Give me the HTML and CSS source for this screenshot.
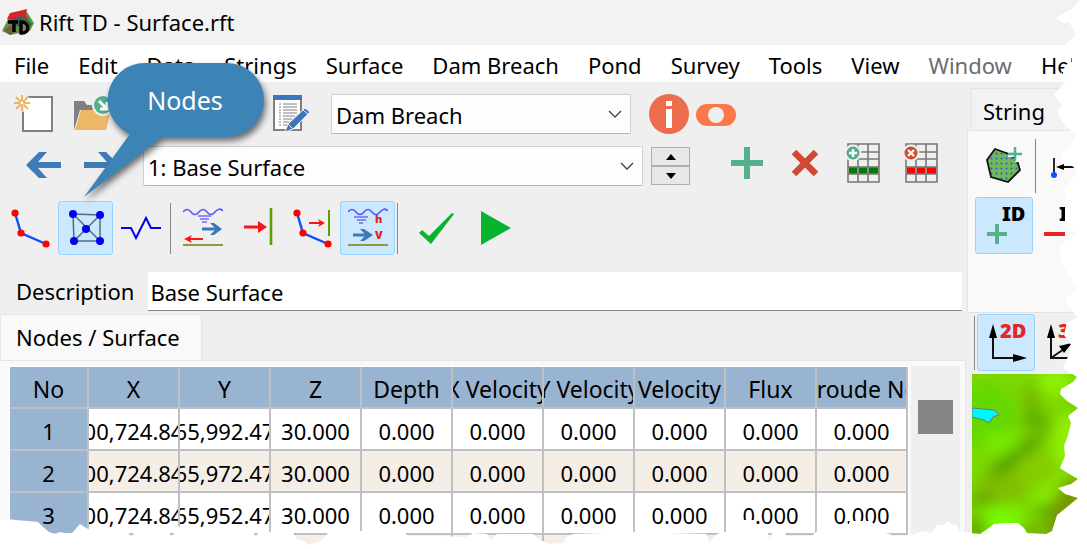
FILE: index.html
```html
<!DOCTYPE html>
<html lang="en">
<head>
<meta charset="utf-8">
<title>Rift TD - Surface.rft</title>
<link rel="stylesheet" href="styles.css">
</head>
<body>
<div class="window">
  <header class="titlebar">
    <svg class="logo" width="32" height="28" viewBox="0 0 32 28" aria-hidden="true">
      <path d="M0 23L5 13L8 6L25 4L32 15L28 23L8 27Z" fill="#5f9150"/>
      <path d="M7 12L22 7L30 16L26 22L10 16Z" fill="#3d6b35"/>
      <path d="M2 22L9 17L15 23L8 27Z" fill="#72613a"/>
      <path d="M5 11L8 5L17 3L25 1L24 7L26 10L18 8L12 11Z" fill="#d5232c"/>
      <path d="M10 12L20 9L21 12L9 16Z" fill="#315f83"/>
      <path d="M6 14H16M12 14V24" stroke="#000" stroke-width="3.400" fill="none"/>
      <path d="M19 14V25C28 26 28 14 19 14Z" stroke="#000" stroke-width="3.400" fill="#8a8270"/>
    </svg>
    <span>Rift TD - Surface.rft</span>
  </header>
  <nav class="menubar">
    <a href="#">File</a><a href="#">Edit</a><a href="#">Data</a><a href="#">Strings</a><a href="#">Surface</a><a href="#">Dam Breach</a><a href="#">Pond</a><a href="#">Survey</a><a href="#">Tools</a><a href="#">View</a><a href="#" class="dim">Window</a><a href="#">Help</a>
  </nav>
  <div class="workspace">
    <main class="editor">
      <div class="bar bar-file">
        <button class="tool" aria-label="New"><svg width="40" height="40" viewBox="0 0 40 40"><path d="M9 3H38V37H9Z" fill="#fff" stroke="#808080" stroke-width="2"/><circle cx="8" cy="9" r="9" fill="#efefef"/><path d="M10 9V4H17V17H10Z" fill="#fff"/><path d="M8 1V17M0 9H16M2 3L14 15M14 3L2 15" stroke="#edb560" stroke-width="2"/><circle cx="8" cy="9" r="2" fill="#fff" stroke="#edb560"/></svg></button>
        <button class="tool" aria-label="Open"><svg width="40" height="40" viewBox="0 0 40 40"><path d="M2 36V7H12L15 11H34V16H8Z" fill="#808080"/><path d="M9 16H39L34 36H3Z" fill="#ecb767"/><circle cx="31" cy="11" r="10" fill="#53ae89" stroke="#efefef" stroke-width="2"/><path d="M27 7L34 14M35 8V15H28" stroke="#fff" stroke-width="3" fill="none"/></svg></button>
        <button class="tool push" aria-label="Properties"><svg width="40" height="40" viewBox="0 0 40 40"><path d="M3 3H30V36H3Z" fill="#fff" stroke="#808080" stroke-width="2"/><path d="M2 1H31V6H2Z" fill="#3e77b8"/><path d="M8 10H10M8 13H10M8 16H10M8 19H10M8 22H10M8 25H10M8 28H10M8 31H10M12 10H26M12 13H26M12 16H26M12 19H26M12 22H24M12 25H21M12 28H18M12 31H17" stroke="#808080" stroke-width="1"/><path d="M14 38L17 30L34 14L39 18L22 35Z" fill="#3e77b8" stroke="#efefef"/><path d="M17 30L22 35M32 16L37 20" stroke="#efefef"/></svg></button>
        <div class="combo combo-small"><select aria-label="Model"><option>Dam Breach</option></select><svg width="14" height="9" viewBox="0 0 14 9"><path d="M1 1L7 7L13 1" fill="none" stroke="#404040" stroke-width="1.3"/></svg></div>
        <button class="bare info" aria-label="Information"><svg width="40" height="40" viewBox="0 0 40 40"><circle cx="20" cy="20" r="20" fill="#ec6d4d"/><path d="M17 7H23V12H17ZM17 15H23V34H17Z" fill="#fff"/></svg></button>
        <button class="bare toggle" aria-label="Toggle"><svg width="40" height="40" viewBox="0 0 40 40"><rect y="10" width="40" height="22" rx="11" fill="#fb784a"/><circle cx="20" cy="21" r="8" fill="#efefef"/></svg></button>
      </div>
      <div class="bar bar-surface">
        <button class="tool" aria-label="Previous"><svg width="36" height="28" viewBox="0 0 36 28"><path d="M0 13L13 0H21L12 10H35V16H12L21 26H13Z" fill="#3e7bb9"/></svg></button>
        <button class="tool" aria-label="Next"><svg width="36" height="28" viewBox="0 0 36 28"><path d="M35 13L22 0H14L23 10H0V16H23L14 26H22Z" fill="#3e7bb9"/></svg></button>
        <div class="combo combo-large"><select aria-label="Surface"><option>1: Base Surface</option></select><svg width="14" height="9" viewBox="0 0 14 9"><path d="M1 1L7 7L13 1" fill="none" stroke="#404040" stroke-width="1.3"/></svg></div>
        <div class="spinner"><button aria-label="Up"><svg width="10" height="6"><path d="M0 6L5 0L10 6Z"/></svg></button><button aria-label="Down"><svg width="10" height="6"><path d="M0 0L5 6L10 0Z"/></svg></button></div>
        <button class="tool raised push" aria-label="Add"><svg width="32" height="32" viewBox="0 0 32 32"><path d="M13 0H19V13H32V19H19V32H13V19H0V13H13Z" fill="#55b18b"/></svg></button>
        <button class="tool raised" aria-label="Delete"><svg width="28" height="28" viewBox="0 0 28 28"><path d="M3 3L25 25M25 3L3 25" stroke="#cf4a31" stroke-width="6.500"/></svg></button>
        <button class="tool raised" aria-label="Insert row"><svg width="36" height="40" viewBox="0 0 36 40"><path d="M3 1H34V39H3ZM3 9H34M3 16H34M3 24H34M3 31H34M13 1V39M23 1V39" fill="none" stroke="#777" stroke-width="1.6"/><path d="M4 24.500H12V30.500H4ZM14 24.500H22V30.500H14ZM24 24.500H33V30.500H24Z" fill="#007d00"/><circle cx="8" cy="10" r="7.500" fill="#53ae89" stroke="#efefef" stroke-width="2"/><path d="M8 6V14M4 10H12" stroke="#fff" stroke-width="2.400"/></svg></button>
        <button class="tool raised" aria-label="Delete row"><svg width="36" height="40" viewBox="0 0 36 40"><path d="M3 1H34V39H3ZM3 9H34M3 16H34M3 24H34M3 31H34M13 1V39M23 1V39" fill="none" stroke="#777" stroke-width="1.6"/><path d="M4 24.500H12V30.500H4ZM14 24.500H22V30.500H14ZM24 24.500H33V30.500H24Z" fill="#f00"/><circle cx="8" cy="10" r="7.500" fill="#cf4a31" stroke="#efefef" stroke-width="2"/><path d="M5 7L11 13M11 7L5 13" stroke="#fff" stroke-width="2.400"/></svg></button>
      </div>
      <div class="bar bar-view">
        <button class="mode" aria-label="Line"><svg width="40" height="40" viewBox="0 0 40 40"><path d="M4 5L10 25L35 36" fill="none" stroke="#0751ff" stroke-width="2.400"/><circle cx="4" cy="5" r="3.600" fill="#f00"/><circle cx="10" cy="25" r="3.600" fill="#f00"/><circle cx="35" cy="36" r="3.600" fill="#f00"/></svg></button>
        <button class="mode active" aria-label="Nodes"><svg width="40" height="40" viewBox="0 0 40 40"><path d="M7 6L34 7V33H8ZL34 33M34 7L8 33" fill="none" stroke="#5a6b78" stroke-width="1.500"/><g fill="#0000f5"><circle cx="7" cy="6" r="4"/><circle cx="34" cy="7" r="4"/><circle cx="20" cy="21" r="4"/><circle cx="8" cy="33" r="4"/><circle cx="34" cy="33" r="4"/></g></svg></button>
        <button class="mode" aria-label="Section"><svg width="40" height="40" viewBox="0 0 40 40"><path d="M0 20H10L15 30L25 10L30 20H40" fill="none" stroke="#0000f5" stroke-width="2"/></svg></button>
        <span class="rule"></span>
        <button class="mode" aria-label="Flow"><svg width="40" height="40" viewBox="0 0 40 40"><path d="M0 4Q4 -1 8 4T16 4Q20 -1 24 4T32 4Q36 -1 40 3" fill="none" stroke="#5b5bf5" stroke-width="1.700"/><path d="M15 8H28M17 11H26M19 14H24" stroke="#6c6cf6" stroke-width="1.400"/><path d="M19 21H36" stroke="#3e77b8" stroke-width="3"/><path d="M27 15H31L39 21L31 27H27L33 21Z" fill="#3e77b8"/><path d="M20 31H5" stroke="#f51616" stroke-width="2"/><path d="M1 31L9 27L7 31L9 35Z" fill="#f51616"/><path d="M0 37H40" stroke="#95973a" stroke-width="2"/></svg></button>
        <button class="mode" aria-label="Boundary"><svg width="40" height="40" viewBox="0 0 40 40"><path d="M6 19H22" stroke="#f51616" stroke-width="3"/><path d="M20 13L29 19L20 25Z" fill="#f51616"/><path d="M33 0V37" stroke="#57a200" stroke-width="2.600"/></svg></button>
        <button class="mode" aria-label="Line boundary"><svg width="40" height="40" viewBox="0 0 40 40"><path d="M4 5L10 25L35 36" fill="none" stroke="#0751ff" stroke-width="2.400"/><path d="M36 2V28" stroke="#57a200" stroke-width="2"/><path d="M16 15H28" stroke="#f51616" stroke-width="2"/><path d="M25 11L32 15L25 19L27 15Z" fill="#f51616"/><circle cx="4" cy="5" r="3.600" fill="#f00"/><circle cx="10" cy="25" r="3.600" fill="#f00"/><circle cx="35" cy="36" r="3.600" fill="#f00"/></svg></button>
        <button class="mode active" aria-label="Depth and velocity"><svg width="40" height="40" viewBox="0 0 40 40"><path d="M0 4Q4 -1 8 4T16 4Q20 -1 24 4T32 4Q36 -1 40 3" fill="none" stroke="#5b5bf5" stroke-width="1.700"/><path d="M6 9H20M9 12H18M11 15H15" stroke="#6c6cf6" stroke-width="1.400"/><path d="M5 27H20" stroke="#3e77b8" stroke-width="3"/><path d="M12 21H16L25 27L16 33H12L18 27Z" fill="#3e77b8"/><path d="M0 37H40" stroke="#95973a" stroke-width="2"/><text x="27" y="15" class="glyph red small">h</text><text x="27" y="31" class="glyph red small">V</text></svg></button>
        <span class="rule"></span>
        <button class="mode after" aria-label="Accept"><svg width="40" height="40" viewBox="0 0 40 40"><path d="M2 25L5 22L12 28L35 5L37 6L14 36Z" fill="#06b32d"/></svg></button>
        <button class="mode run" aria-label="Run"><svg width="40" height="40" viewBox="0 0 40 40"><path d="M5 3L35 20L5 37Z" fill="#06b32d"/></svg></button>
      </div>
      <div class="description"><label for="desc">Description</label><input id="desc" value="Base Surface"></div>
      <div class="tabs"><button class="tab">Nodes / Surface</button></div>
      <section class="panel">
        <div class="sheet">
          <table>
            <colgroup><col class="col-no"><col><col><col><col><col><col><col><col><col></colgroup>
            <thead><tr><th><div>No</div></th><th><div>X</div></th><th><div>Y</div></th><th><div>Z</div></th><th><div>Depth</div></th><th><div>X Velocity</div></th><th><div>Y Velocity</div></th><th><div>Velocity</div></th><th><div>Flux</div></th><th><div>Froude No</div></th></tr></thead>
            <tbody>
              <tr><th><div>1</div></th><td><div>00,724.84</div></td><td><div>65,992.47</div></td><td><div>30.000</div></td><td><div>0.000</div></td><td><div>0.000</div></td><td><div>0.000</div></td><td><div>0.000</div></td><td><div>0.000</div></td><td><div>0.000</div></td></tr>
              <tr><th><div>2</div></th><td><div>00,724.84</div></td><td><div>65,972.47</div></td><td><div>30.000</div></td><td><div>0.000</div></td><td><div>0.000</div></td><td><div>0.000</div></td><td><div>0.000</div></td><td><div>0.000</div></td><td><div>0.000</div></td></tr>
              <tr><th><div>3</div></th><td><div>00,724.84</div></td><td><div>65,952.47</div></td><td><div>30.000</div></td><td><div>0.000</div></td><td><div>0.000</div></td><td><div>0.000</div></td><td><div>0.000</div></td><td><div>0.000</div></td><td><div>0.000</div></td></tr>
              <tr><th><div></div></th><td></td><td></td><td></td><td></td><td></td><td></td><td></td><td></td><td></td></tr>
            </tbody>
          </table>
        </div>
        <div class="scrollbar"><div class="thumb"></div></div>
      </section>
    </main>
    <aside class="side">
      <div class="side-tab">String</div>
      <div class="side-panel">
        <div class="side-row">
          <button class="big" aria-label="Add polygon"><svg width="40" height="40" viewBox="0 0 40 40"><defs><pattern id="dots" width="5" height="5" patternUnits="userSpaceOnUse"><rect width="5" height="5" fill="#72b75a"/><circle cx="2.500" cy="2.500" r="1" fill="#175fe0"/></pattern></defs><path d="M11 3L3 14L7 31L24 36L36 24L33 14L25 8Z" fill="url(#dots)" stroke="#111" stroke-width="1.800"/><path d="M24 0H40V16H31V11H24Z" fill="#f9f9f9"/><path d="M31 1V15M24 8H38" stroke="#55b18b" stroke-width="2.600"/></svg></button>
          <span class="rule tall"></span>
          <button class="big" aria-label="Node distance"><svg width="40" height="40" viewBox="0 0 40 40"><path d="M7 12V26M12 21H30" stroke="#111" stroke-width="1.800"/><path d="M9 21L17 18V24Z"/><circle cx="7" cy="29" r="3" fill="#0751ff"/></svg></button>
        </div>
        <div class="side-row">
          <button class="big active" aria-label="Add ID"><svg width="44" height="44" viewBox="0 0 44 44"><text x="20" y="17" class="glyph">ID</text><path d="M15 20V40M5 30H25" stroke="#55b18b" stroke-width="4"/></svg></button>
          <button class="big" aria-label="Remove ID"><svg width="44" height="44" viewBox="0 0 44 44"><text x="19" y="17" class="glyph">ID</text><path d="M4 30H25" stroke="#e62420" stroke-width="4"/></svg></button>
        </div>
      </div>
      <div class="side-row view-row">
        <span class="rule tall"></span>
        <button class="big active" aria-label="2D view"><svg width="44" height="44" viewBox="0 0 44 44"><path d="M9 12V37H34" fill="none" stroke="#111" stroke-width="2"/><path d="M9 3L13 17H5ZM43 37L29 33V41Z"/><text x="16" y="17" class="glyph red">2D</text></svg></button>
        <button class="big" aria-label="3D view"><svg width="44" height="44" viewBox="0 0 44 44"><path d="M9 12V37H34M9 37L22 28" fill="none" stroke="#111" stroke-width="2"/><path d="M9 3L13 17H5ZM43 37L29 33V41ZM30 22L22 32L17 25Z"/><text x="16" y="17" class="glyph red">3D</text></svg></button>
      </div>
      <svg class="map" viewBox="0 0 115 175" preserveAspectRatio="none" role="img" aria-label="Surface map">
        <defs><filter id="soft" x="-50%" y="-50%" width="200%" height="200%"><feGaussianBlur stdDeviation="7"/></filter></defs>
        <rect width="115" height="175" fill="#7cd800"/>
        <g filter="url(#soft)">
          <ellipse cx="14" cy="40" rx="30" ry="32" fill="#64d800"/>
          <ellipse cx="30" cy="68" rx="17" ry="10" fill="#78ec00"/>
          <ellipse cx="60" cy="25" rx="8" ry="14" fill="#74b000"/>
          <ellipse cx="83" cy="8" rx="17" ry="14" fill="#8ff000"/>
          <ellipse cx="62" cy="45" rx="12" ry="9" fill="#5cac00"/>
          <ellipse cx="78" cy="52" rx="38" ry="8" fill="#6fb900" transform="rotate(-38 78 52)"/>
          <ellipse cx="94" cy="65" rx="14" ry="30" fill="#8ff000"/>
          <ellipse cx="40" cy="86" rx="36" ry="8" fill="#579f00" transform="rotate(-38 40 86)"/>
          <ellipse cx="65" cy="95" rx="22" ry="16" fill="#84cc00"/>
          <ellipse cx="30" cy="115" rx="26" ry="14" fill="#82be00"/>
          <ellipse cx="10" cy="125" rx="14" ry="7" fill="#61a800"/>
          <ellipse cx="80" cy="116" rx="26" ry="7" fill="#8df000" transform="rotate(-35 80 116)"/>
          <ellipse cx="73" cy="137" rx="12" ry="8" fill="#5fb400"/>
          <ellipse cx="30" cy="146" rx="22" ry="14" fill="#76fa00"/>
          <ellipse cx="4" cy="155" rx="10" ry="13" fill="#63a400"/>
          <ellipse cx="93" cy="136" rx="14" ry="36" fill="#749800" transform="rotate(18 93 136)"/>
          <ellipse cx="62" cy="158" rx="16" ry="8" fill="#77ad00"/>
        </g>
        <path d="M0 34L22 36L27 41L21 43L17 49L12 46L0 43Z" fill="#00f6ff" stroke="#67806c"/>
      </svg>
    </aside>
  </div>
  <svg class="torn" viewBox="0 0 1087 549" preserveAspectRatio="none" aria-hidden="true"><path fill="#fff" d="M1087 0H1080L1073 8L1056 18L1064 23L1069 22L1075 32L1075 36L1066 44L1072 58L1072 62L1065 65L1062 77L1061 70L1065 82L1054 95L1062 105L1057 111L1061 120L1069 129L1076 135L1070 146L1062 153L1060 158L1071 165L1078 171L1071 181L1065 191L1065 205L1065 222L1065 226L1077 233L1066 240L1059 249L1061 262L1068 273L1077 287L1068 297L1066 302L1071 309L1077 318L1067 322L1064 335L1071 345L1070 352L1063 368L1069 372L1077 377L1073 382L1061 389L1060 394L1067 401L1078 408L1068 416L1071 423L1068 435L1064 446L1065 456L1060 468L1066 472L1078 479L1071 484L1058 488L1065 494L1078 498L1067 507L1057 515L1052 531L1046 534L1027 533L1024 528L1018 523L1005 523L994 524L986 530L980 534L960 532L956 524L952 525L948 521L943 525L937 525L932 533L924 531L915 534L908 535L892 536L890 534L876 531L872 521H850L846 530L818 530L812 536L787 536L785 533H772L770 540L768 533L755 531L754 520H738L734 530L725 532L717 534L710 542L706 534L634 532L574 534L568 536L563 543L550 544L540 540L533 534L497 534L491 540L487 534L473 533L466 537L440 536L408 536L405 533L361 531L328 533L322 540L315 543L308 545L305 541L298 540L293 533L270 532L258 533L257 536H254V533L182 530L179 526L174 533L173 536H170V533L134 532L133 536H129V533L100 531L88 529L80 524L72 533H65L60 532L55 534L49 532L42 526L38 522L28 521L15 520L8 519L0 520V549H1087Z"/></svg>
  <div class="callout">
    <svg width="190" height="150" viewBox="0 0 190 150" aria-hidden="true"><path d="M65 3H147A37 37 0 0 1 147 77H82L4 137L50 74A37 37 0 0 1 65 3Z" fill="#3c83b6"/></svg>
    <span>Nodes</span>
  </div>
</div>
</body>
</html>
```

FILE: styles.css
```css
* { box-sizing: border-box; }
body { margin: 0; background: #fff; color: #000; font: 22px/30px "Noto Sans", "Open Sans", sans-serif; }
button, input, select { font: inherit; color: inherit; margin: 0; padding: 0; border: 0; background: none; border-radius: 0; }
button { display: flex; align-items: center; justify-content: center; }
svg { display: block; flex: none; }
.window { position: relative; display: flex; flex-direction: column; height: 100vh; overflow: hidden; background: #efefef; }
.titlebar { display: flex; align-items: center; gap: 5px; flex: none; height: 45px; padding: 0 2px 2px; background: #f2f2f2; }
.menubar { display: flex; align-items: center; gap: 29px; flex: none; height: 37px; padding: 2px 14px 0; background: #fff; white-space: nowrap; }
.menubar a { color: inherit; text-decoration: none; }
.menubar .dim { color: #6d6d6d; }
.workspace { display: flex; flex: 1; min-height: 0; }
.editor { display: flex; flex-direction: column; flex: 1; min-width: 0; }

.bar { display: flex; align-items: center; flex: none; }
.bar-file { margin-top: 12px; padding-left: 5px; height: 40px; }
.bar-surface { margin-top: 12px; padding-left: 15px; height: 40px; }
.bar-view { margin-top: 15px; padding-left: 3px; height: 54px; }
.tool { width: 58px; height: 40px; }
.tool.raised { height: 40px; padding-bottom: 6px; }
.bar-file .push { margin-left: 141px; }
.bar-surface .push { margin-left: 28px; }
.combo { position: relative; height: 40px; }
.combo-small { width: 300px; margin-left: 11px; }
.combo-large { width: 500px; margin-left: 12px; }
.combo select { appearance: none; width: 100%; height: 100%; padding: 1px 30px 0 4px; background: #fdfdfd; border: 1px solid #cfcfcf; border-bottom-color: #b5b5b5; border-radius: 2px; }
.combo svg { position: absolute; right: 9px; top: 16px; pointer-events: none; }
.info { margin-left: 18px; }
.toggle { margin-left: 7px; }
.spinner { display: flex; flex-direction: column; width: 39px; margin-left: 8px; }
.spinner button { height: 19px; background: #e8e8e8; border: 1px solid #adadad; }
.mode { width: 55px; height: 54px; }
.active { background: #cce8ff; border: 1px solid #99d1ff; border-radius: 3px; }
.rule { width: 1px; height: 51px; margin: 0 4px 0 2px; background: #858585; flex: none; }
.mode.after { margin-left: 7px; }
.mode.run { margin-left: 4px; }
.glyph { font: 900 20px "Noto Sans", sans-serif; }
.glyph.small { font-size: 11px; }
.red { fill: #e62424; }

.description { display: flex; align-items: center; gap: 14px; flex: none; height: 39px; margin: 17px 5px 0 16px; }
.description label { padding-bottom: 2px; }
.description input { flex: 1; min-width: 0; height: 39px; padding: 1px 2px 0; background: #fff; border-bottom: 1px solid #868686; }
.tabs { display: flex; flex: none; margin-top: 3px; }
.tab { height: 46px; padding: 0 21px 2px 15px; background: #f9f9f9; border: 1px solid #e5e5e5; border-bottom: 0; }
.panel { display: flex; flex: 1; min-height: 0; margin-right: 1px; padding: 5px 5px 0 9px; background: #f9f9f9; border-top: 1px solid #e5e5e5; border-right: 1px solid #e5e5e5; }
.sheet { flex: 1; min-width: 0; overflow: hidden; padding: 1px; background: #fff; }
table { width: 100%; table-layout: fixed; border-collapse: separate; border-spacing: 0; }
.col-no { width: 79px; }
th, td { height: 42px; padding: 0; font-weight: 400; border-right: 2px solid #c0c0c0; border-bottom: 2px solid #c0c0c0; background: #fff; }
th { background: #99b4d1; }
thead th { font-size: 23px; }
tbody tr:nth-child(even) td { background: #f5eee6; }
th div, td div { display: flex; justify-content: center; overflow: hidden; white-space: nowrap; padding-top: 4px; }
.scrollbar { width: 49px; margin-left: 2px; padding: 34px 7px 0; background: #efefef; }
.thumb { height: 34px; background: #858585; }

.side { display: flex; flex-direction: column; flex: none; width: 120px; }
.side-tab { flex: none; height: 42px; margin: 6px 0 0 4px; padding: 7px 11px 0; background: #f2f2f2; border: 1px solid #e3e3e3; border-bottom: 0; }
.side-panel { flex: none; height: 183px; padding: 6px 0 0 7px; background: #f9f9f9; border: 1px solid #e3e3e3; border-right: 0; }
.side-row { display: flex; align-items: center; height: 57px; margin-bottom: 3px; overflow: hidden; }
.big { width: 58px; height: 57px; flex: none; }
.rule.tall { height: 54px; margin: 0 2px; }
.view-row { flex: none; margin: 1px 0 0 5px; }
.map { flex: 1; min-height: 0; width: 115px; margin: 3px 0 0 5px; }

.torn { position: absolute; inset: 0; width: 100%; height: 100%; pointer-events: none; }
.callout { position: absolute; left: 80px; top: 60px; color: #fff; font-size: 25px; }
.callout svg { filter: drop-shadow(2px 4px 3px rgba(0, 0, 0, .55)); }
.callout span { position: absolute; left: 28px; top: 25px; width: 156px; padding-right: 2px; text-align: center; }
```
